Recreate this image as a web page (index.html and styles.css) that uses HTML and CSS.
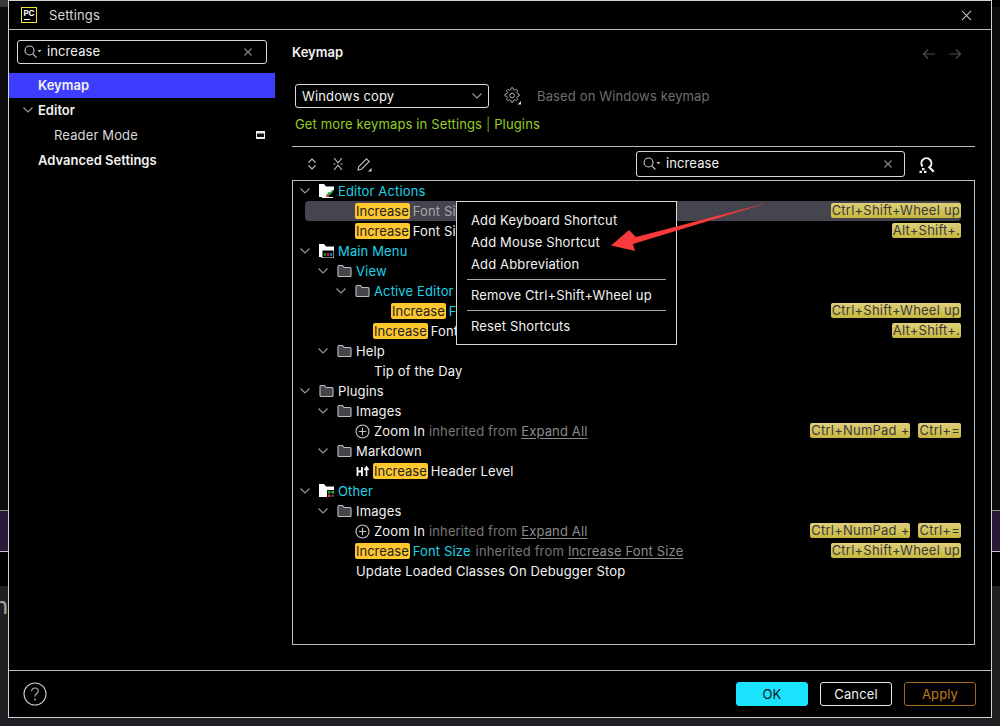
FILE: index.html
```html
<!DOCTYPE html>
<html lang="en">
<head>
<meta charset="utf-8">
<title>Settings</title>
<link rel="stylesheet" href="styles.css">
</head>
<body>
<svg class="defs" width="0" height="0" aria-hidden="true">
  <symbol id="chev" viewBox="0 0 12 12"><path d="M1.500 3.500 6 8l4.500-4.500" fill="none" stroke="#9a9a9a" stroke-width="1.100"/></symbol>
  <symbol id="search" viewBox="0 0 18 14"><circle cx="5.500" cy="5.500" r="4.500" fill="none" stroke="#c8c8c8" stroke-width="1.100"/><path d="M8.800 8.800 12.500 12.500" stroke="#c8c8c8" stroke-width="1.100"/><path d="M13.500 5h4l-2 2.200z" fill="#c8c8c8"/></symbol>
  <symbol id="x" viewBox="0 0 10 10"><path d="M1.500 1.500l7 7M8.500 1.500l-7 7" stroke="#8a8a8a" stroke-width="1.100"/></symbol>
  <symbol id="folder" viewBox="0 0 15 14"><path d="M1 2.500C1 1.700 1.600 1.500 2 1.500h3.500L7 3.500h6c.6 0 1 .4 1 1v7c0 .6-.4 1-1 1H2c-.6 0-1-.4-1-1z" fill="#43454a" stroke="#bdbdbd" stroke-width="1.100"/></symbol>
  <symbol id="plus" viewBox="0 0 15 15"><circle cx="7.500" cy="7.500" r="6.500" fill="none" stroke="#c8c8c8" stroke-width="1.100"/><path d="M7.500 3.800v7.400M3.800 7.500h7.400" stroke="#c8c8c8" stroke-width="1.100"/></symbol>
</svg>

<div class="stage">
  <div class="strip strip-a"></div>
  <div class="strip strip-b"></div>
  <div class="strip strip-c"></div>
  <div class="strip strip-d"></div>
  <div class="strip strip-f"><span class="stray">n</span></div>

  <div class="dialog">
    <header class="titlebar">
      <div class="logo"><span class="logo-text">PC</span><span class="logo-bar"></span></div>
      <span class="title">Settings</span>
      <svg class="close" viewBox="0 0 12 12"><path d="M1 1l10 10M11 1 1 11" stroke="#c8c8c8" stroke-width="1.100"/></svg>
    </header>

    <div class="body">
      <aside class="sidebar">
        <div class="searchbox side-search">
          <svg class="s-icon"><use href="#search"/></svg>
          <span class="s-text">increase</span>
          <svg class="s-x"><use href="#x"/></svg>
        </div>
        <ul class="nav">
          <li class="nav-item nav-sel strong">Keymap</li>
          <li class="nav-item strong"><svg class="nav-chev"><use href="#chev"/></svg>Editor</li>
          <li class="nav-item nav-sub">Reader Mode
            <svg class="nav-badge" viewBox="0 0 9 8"><rect width="9" height="8" fill="#eee"/><rect x="1" y="2.500" width="7" height="3.500" fill="#111"/></svg>
          </li>
          <li class="nav-item strong">Advanced Settings</li>
        </ul>
      </aside>

      <main class="main">
        <div class="head">
          <h1 class="h-title">Keymap</h1>
          <svg class="h-arrow h-back" viewBox="0 0 14 12"><path d="M13 6H1.500M6 1.500 1.500 6 6 10.500" fill="none" stroke="#4c4c4c" stroke-width="1.200"/></svg>
          <svg class="h-arrow h-next" viewBox="0 0 14 12"><path d="M1 6h11.500M8 1.500 12.500 6 8 10.500" fill="none" stroke="#4c4c4c" stroke-width="1.200"/></svg>
        </div>

        <div class="scheme">
          <div class="combo"><span>Windows copy</span><svg class="combo-chev"><use href="#chev"/></svg></div>
          <svg class="gear" viewBox="0 0 18 18"><path d="M8 1.500h2l.5 2 1.500.7 1.800-1 1.400 1.400-1 1.800.7 1.600 2 .5v2l-2 .5-.7 1.500 1 1.800-1.400 1.400-1.800-1-1.500.7-.5 2H8l-.5-2-1.500-.7-1.800 1-1.400-1.400 1-1.800-.7-1.500-2-.5v-2l2-.5.7-1.600-1-1.800 1.400-1.400 1.800 1 1.500-.7z" transform="translate(0 -.500) scale(.9)" fill="none" stroke="#b5b5b5"/><circle cx="8.100" cy="8.500" r="2.300" fill="none" stroke="#b5b5b5"/><path d="M17 14v3.500h-3.500z" fill="#d8d8d8"/></svg>
          <span class="based">Based on Windows keymap</span>
        </div>

        <div class="link">Get more keymaps in Settings <span class="link-sep">|</span> Plugins</div>
        <div class="rule"></div>

        <div class="toolbar">
          <svg class="tool" viewBox="0 0 14 14"><path d="M3.500 5.500 7 2l3.500 3.500M3.500 8.500 7 12l3.500-3.500" fill="none" stroke="#bdbdbd" stroke-width="1.100"/></svg>
          <svg class="tool" viewBox="0 0 14 14"><path d="M3 1 7 5.800 11 1M3 13 7 8.200 11 13M2.500 7h2M9.500 7h2" fill="none" stroke="#bdbdbd" stroke-width="1.100"/></svg>
          <svg class="tool tool-pen" viewBox="0 0 16 16"><path d="M2 14l.8-3.500L10.500 2.800l2.700 2.700-7.700 7.700z" fill="none" stroke="#bdbdbd" stroke-width="1.100"/><path d="M15.500 12v3.500H12z" fill="#d8d8d8"/></svg>
          <div class="searchbox key-search">
            <svg class="s-icon"><use href="#search"/></svg>
            <span class="s-text">increase</span>
            <svg class="s-x"><use href="#x"/></svg>
          </div>
          <svg class="find" viewBox="0 0 16 16"><path d="M3.600 9.500A5 5 0 1 1 11 9.700" fill="none" stroke="#f4f4f4" stroke-width="2"/><path d="M9.500 9.500 14.800 14.800" stroke="#f4f4f4" stroke-width="2.200"/><path d="M3 11h2.500v2.300H3zM.5 13.700H3V16H.5zM5 13.700h2.500V16H5z" fill="#f4f4f4"/></svg>
        </div>

        <div class="tree">
          <div class="row d0"><svg class="chev"><use href="#chev"/></svg>
            <svg class="ficon" viewBox="0 0 15 14"><path d="M0 0h5l2 2.500h8v3L8 13H0z" fill="#fff"/><path d="M8 11.500l2-2.500 1 1 3-3.500" stroke="#1fa32b" stroke-width="1.800" fill="none"/><path d="M7 12h3" stroke="#e03333" stroke-width="1.500"/><path d="M3 13.500h11" stroke="#fff"/></svg>
            <span class="cyan">Editor Actions</span></div>
          <div class="row sel"><mark class="hit">Increase</mark><span class="dim gap3">Font Size</span><span class="keys"><kbd class="key">Ctrl+Shift+Wheel up</kbd></span></div>
          <div class="row l62"><mark class="hit">Increase</mark><span class="gap3">Font Size</span><span class="keys"><kbd class="key">Alt+Shift+.</kbd></span></div>
          <div class="row d0"><svg class="chev"><use href="#chev"/></svg>
            <svg class="ficon" viewBox="0 0 15 14"><path d="M0 0h5l2 2.500h8V13H0z" fill="#fff"/><rect x="3" y="6" width="12" height="8" fill="#000" stroke="#fff"/><path d="M5 10.500h2.200" stroke="#1fa32b" stroke-width="2.400"/><path d="M8 10.500h2.200" stroke="#e03333" stroke-width="2.400"/><path d="M11 10.500h2.200" stroke="#2f7de0" stroke-width="2.400"/></svg>
            <span class="cyan">Main Menu</span></div>
          <div class="row d1"><svg class="chev"><use href="#chev"/></svg><svg class="ficon"><use href="#folder"/></svg><span class="cyan">View</span></div>
          <div class="row d2"><svg class="chev"><use href="#chev"/></svg><svg class="ficon"><use href="#folder"/></svg><span class="cyan">Active Editor</span></div>
          <div class="row l98"><mark class="hit">Increase</mark><span class="cyan gap3">Font Size</span><span class="keys"><kbd class="key">Ctrl+Shift+Wheel up</kbd></span></div>
          <div class="row l80"><mark class="hit">Increase</mark><span class="gap3">Font Size</span><span class="keys"><kbd class="key">Alt+Shift+.</kbd></span></div>
          <div class="row d1"><svg class="chev"><use href="#chev"/></svg><svg class="ficon"><use href="#folder"/></svg><span>Help</span></div>
          <div class="row l81"><span>Tip of the Day</span></div>
          <div class="row d0"><svg class="chev"><use href="#chev"/></svg><svg class="ficon"><use href="#folder"/></svg><span>Plugins</span></div>
          <div class="row d1"><svg class="chev"><use href="#chev"/></svg><svg class="ficon"><use href="#folder"/></svg><span>Images</span></div>
          <div class="row l62"><svg class="plus"><use href="#plus"/></svg><span>Zoom In</span><span class="dim2 gap4">inherited from</span><span class="ulink gap4">Expand All</span><span class="keys"><kbd class="key">Ctrl+NumPad +</kbd><kbd class="key">Ctrl+=</kbd></span></div>
          <div class="row d1"><svg class="chev"><use href="#chev"/></svg><svg class="ficon"><use href="#folder"/></svg><span>Markdown</span></div>
          <div class="row l63"><svg class="hicon" viewBox="0 0 13 11"><path d="M1.500 1v9M6 1v9M1.500 5.500H6" stroke="#fff" stroke-width="1.800"/><path d="M10.500 10V2M8.500 4l2-3 2 3" fill="none" stroke="#fff" stroke-width="1.600"/></svg><mark class="hit">Increase</mark><span class="gap3">Header Level</span></div>
          <div class="row d0"><svg class="chev"><use href="#chev"/></svg>
            <svg class="ficon" viewBox="0 0 15 14"><path d="M0 0h5l2 2.500h8V6H8v7H0z" fill="#fff"/><rect x="9" y="7" width="2.500" height="2.500" fill="#1fa32b"/><rect x="12.500" y="7" width="2.500" height="2.500" fill="#2fb04a"/><rect x="9" y="10.500" width="2.500" height="2.500" fill="#e03333"/><rect x="12.500" y="10.500" width="2.500" height="2.500" fill="#444"/></svg>
            <span class="cyan">Other</span></div>
          <div class="row d1"><svg class="chev"><use href="#chev"/></svg><svg class="ficon"><use href="#folder"/></svg><span>Images</span></div>
          <div class="row l62"><svg class="plus"><use href="#plus"/></svg><span>Zoom In</span><span class="dim2 gap4">inherited from</span><span class="ulink gap4">Expand All</span><span class="keys"><kbd class="key">Ctrl+NumPad +</kbd><kbd class="key">Ctrl+=</kbd></span></div>
          <div class="row l62"><mark class="hit">Increase</mark><span class="cyan gap3">Font Size</span><span class="dim2 gap5">inherited from</span><span class="ulink gap4">Increase Font Size</span><span class="keys"><kbd class="key">Ctrl+Shift+Wheel up</kbd></span></div>
          <div class="row l63"><span>Update Loaded Classes On Debugger Stop</span></div>
        </div>
      </main>
    </div>

    <footer class="footer">
      <svg class="help" viewBox="0 0 24 24"><circle cx="12" cy="12" r="11" fill="none" stroke="#c8c8c8" stroke-width="1.100"/><path d="M8.700 9.300C8.700 7.300 10.200 6 12 6s3.300 1.200 3.300 3c0 2.500-3.300 2.700-3.300 5.500" fill="none" stroke="#b0b0b0" stroke-width="1.200"/><circle cx="12" cy="17.500" r=".9" fill="#b0b0b0"/></svg>
      <button class="btn btn-ok">OK</button>
      <button class="btn btn-cancel">Cancel</button>
      <button class="btn btn-apply">Apply</button>
    </footer>
  </div>

  <div class="menu">
    <div class="menu-item">Add Keyboard Shortcut</div>
    <div class="menu-item">Add Mouse Shortcut</div>
    <div class="menu-item">Add Abbreviation</div>
    <div class="menu-sep"></div>
    <div class="menu-item">Remove Ctrl+Shift+Wheel up</div>
    <div class="menu-sep"></div>
    <div class="menu-item">Reset Shortcuts</div>
  </div>

  <svg class="annot" viewBox="0 0 160 50"><path d="M157 2 26 36l-7-7L1 44.500 25 50l-2-7z" fill="#f83a3a"/></svg>
</div>
</body>
</html>
```

FILE: styles.css
```css
* { box-sizing: border-box; }
html, body { margin: 0; padding: 0; height: 100%; background: #1e1f22; }
body { font-family: Inter, "Noto Sans", sans-serif; font-size: 13px; letter-spacing: .14px; color: #f2f2f2; overflow: hidden; }
ul { list-style: none; margin: 0; padding: 0; }
.defs { position: absolute; }

.stage { position: relative; width: 1000px; height: 726px; overflow: hidden; }
.strip { width: 100%; }
.strip-a { height: 7px; background: linear-gradient(to right, #3a3a3e 8px, #000 8px); }
.strip-b { height: 504px; background: #0c0c0c; border-bottom: 1px solid #8a8a8a; }
.strip-c { height: 41px; background: #28193a; border-bottom: 1px solid #c4c4c4; }
.strip-d { height: 34px; background: #000; }
.strip-f { height: 140px; background: #1e1f22; padding-top: 7px; }
.stray { display: block; font-size: 24px; line-height: 26px; margin-left: -6px; color: #a8a29a; }

.dialog { position: absolute; left: 8px; top: 0; width: 984px; height: 718px; background: #000; border: 1px solid #d2d2d2; display: flex; flex-direction: column; }

.titlebar { flex: none; height: 29px; border-bottom: 1px solid #bdbdbd; display: flex; align-items: center; padding: 0 19px 0 12px; }
.logo { width: 16px; height: 16px; border: 1px solid #f2e82a; display: flex; flex-direction: column; align-items: center; }
.logo-text { font-size: 8px; line-height: 9px; font-weight: 700; letter-spacing: 0; color: #fff; margin-top: 1px; }
.logo-bar { align-self: flex-start; width: 6px; height: 1px; margin: 1px 0 0 2px; background: #fff; }
.title { margin-left: 12px; color: #d8d8d8; }
.close { width: 11px; height: 11px; margin-left: auto; }

.body { flex: 1; min-height: 0; display: flex; }

.sidebar { flex: none; width: 266px; padding-top: 10px; }
.searchbox { height: 24px; border: 1px solid #d8d8d8; border-radius: 3px; display: flex; align-items: center; padding: 0 13px 0 6px; }
.side-search { width: 250px; margin: 0 0 9px 8px; }
.s-icon { width: 18px; height: 14px; flex: none; }
.s-text { margin-left: 5px; margin-bottom: 2px; letter-spacing: .1px; }
.s-x { width: 10px; height: 10px; margin-left: auto; flex: none; }

.nav-item { position: relative; height: 25px; display: flex; align-items: center; padding: 0 0 2px 29px; }
.strong { font-weight: 600; letter-spacing: 0; }
.nav-sel { background: #3d3dff; }
.nav-chev { position: absolute; left: 13px; top: 6px; width: 12px; height: 12px; }
.nav-sub { padding-left: 45px; color: #d8d8d8; }
.nav-badge { width: 9px; height: 8px; margin-left: auto; margin-right: 10px; }

.main { flex: 1; min-width: 0; padding: 12px 16px 25px 17px; display: flex; flex-direction: column; }
.head { flex: none; height: 20px; display: flex; align-items: center; }
.h-title { margin: 0; font-size: 13px; font-weight: 600; letter-spacing: 0; }
.h-arrow { width: 14px; height: 12px; margin-top: 4px; }
.h-back { margin-left: auto; }
.h-next { margin: 4px 13px 0 12px; }

.scheme { flex: none; height: 24px; margin-top: 22px; display: flex; align-items: center; }
.combo { width: 194px; height: 24px; margin-left: 3px; border: 1px solid #d8d8d8; border-radius: 3px; display: flex; align-items: center; padding: 0 5px 0 6px; }
.combo-chev { width: 12px; height: 12px; margin-left: auto; }
.gear { width: 18px; height: 18px; margin-left: 15px; }
.based { margin-left: 15px; color: #6f6f6f; }

.link { flex: none; height: 20px; margin-top: 6px; padding-left: 3px; line-height: 20px; color: #94cf20; }
.link-sep { color: #5fa820; }
.rule { flex: none; height: 1px; margin-top: 12px; background: #bdbdbd; }

.toolbar { flex: none; height: 26px; margin-top: 4px; display: flex; align-items: center; padding-left: 13px; }
.tool { width: 14px; height: 14px; margin-right: 12px; }
.tool-pen { width: 16px; height: 16px; margin-left: -1px; }
.key-search { width: 269px; height: 26px; margin-left: auto; padding-right: 11px; }
.find { width: 16px; height: 16px; margin: 1px 40px 0 14px; }

.tree { flex: 1; min-height: 0; margin-top: 3px; border: 1px solid #bdbdbd; overflow: hidden; }
.row { height: 20px; display: flex; align-items: center; white-space: nowrap; padding-right: 13px; }
.d0 { padding-left: 6px; }
.d1 { padding-left: 24px; }
.d2 { padding-left: 42px; }
.l62 { padding-left: 62px; }
.l63 { padding-left: 63px; }
.l80 { padding-left: 80px; }
.l81 { padding-left: 81px; }
.l98 { padding-left: 98px; }
.chev { width: 12px; height: 12px; flex: none; margin-right: 8px; }
.ficon { width: 15px; height: 14px; flex: none; margin-right: 4px; }
.plus { width: 15px; height: 15px; flex: none; margin-right: 4px; }
.hicon { width: 13px; height: 11px; flex: none; margin-right: 4px; }
.cyan { color: #1fd2e6; }
.dim { color: #a8a8a8; }
.dim2 { color: #777; }
.gap3 { margin-left: 3px; }
.gap4 { margin-left: 4px; }
.gap5 { margin-left: 5px; }
.ulink { color: #8a8a8a; text-decoration: underline; text-underline-offset: 2px; }
.hit { background: #ffc72e; color: #222; border-radius: 2px; padding: 0 1px; line-height: 16px; letter-spacing: 0; }
.sel { background: #45454f; border-radius: 4px; margin: 0 13px 0 12px; padding-left: 50px; padding-right: 0; }
.keys { margin-left: auto; display: flex; gap: 8px; margin-top: -1px; }
.key { font-family: inherit; font-size: 13px; line-height: 15px; letter-spacing: .22px; padding: 0 1px; border-radius: 2px; color: #3a3a3a; background: linear-gradient(#dfcf7a, #c8b83e); }

.footer { flex: none; height: 47px; border-top: 1px solid #bdbdbd; display: flex; align-items: center; padding: 0 15px 1px 14px; gap: 12px; }
.help { width: 24px; height: 24px; margin-right: auto; }
.btn { width: 72px; height: 24px; border-radius: 3px; font: inherit; letter-spacing: .14px; background: #000; padding: 0; }
.btn-ok { background: #19e3ff; border: 1px solid #19e3ff; color: #111; }
.btn-cancel { border: 1px solid #e8e8e8; color: #f2f2f2; }
.btn-apply { border: 1px solid #a9651f; color: #bd7a1e; }

.menu { position: absolute; left: 456px; top: 201px; width: 221px; height: 144px; background: #000; border: 1px solid #d8d8d8; padding-top: 7px; }
.menu-item { height: 22px; line-height: 22px; padding-left: 14px; }
.menu-sep { height: 1px; margin: 4px 10px; background: #a8a8a8; }
.annot { position: absolute; left: 610px; top: 201px; width: 160px; height: 50px; }
```
